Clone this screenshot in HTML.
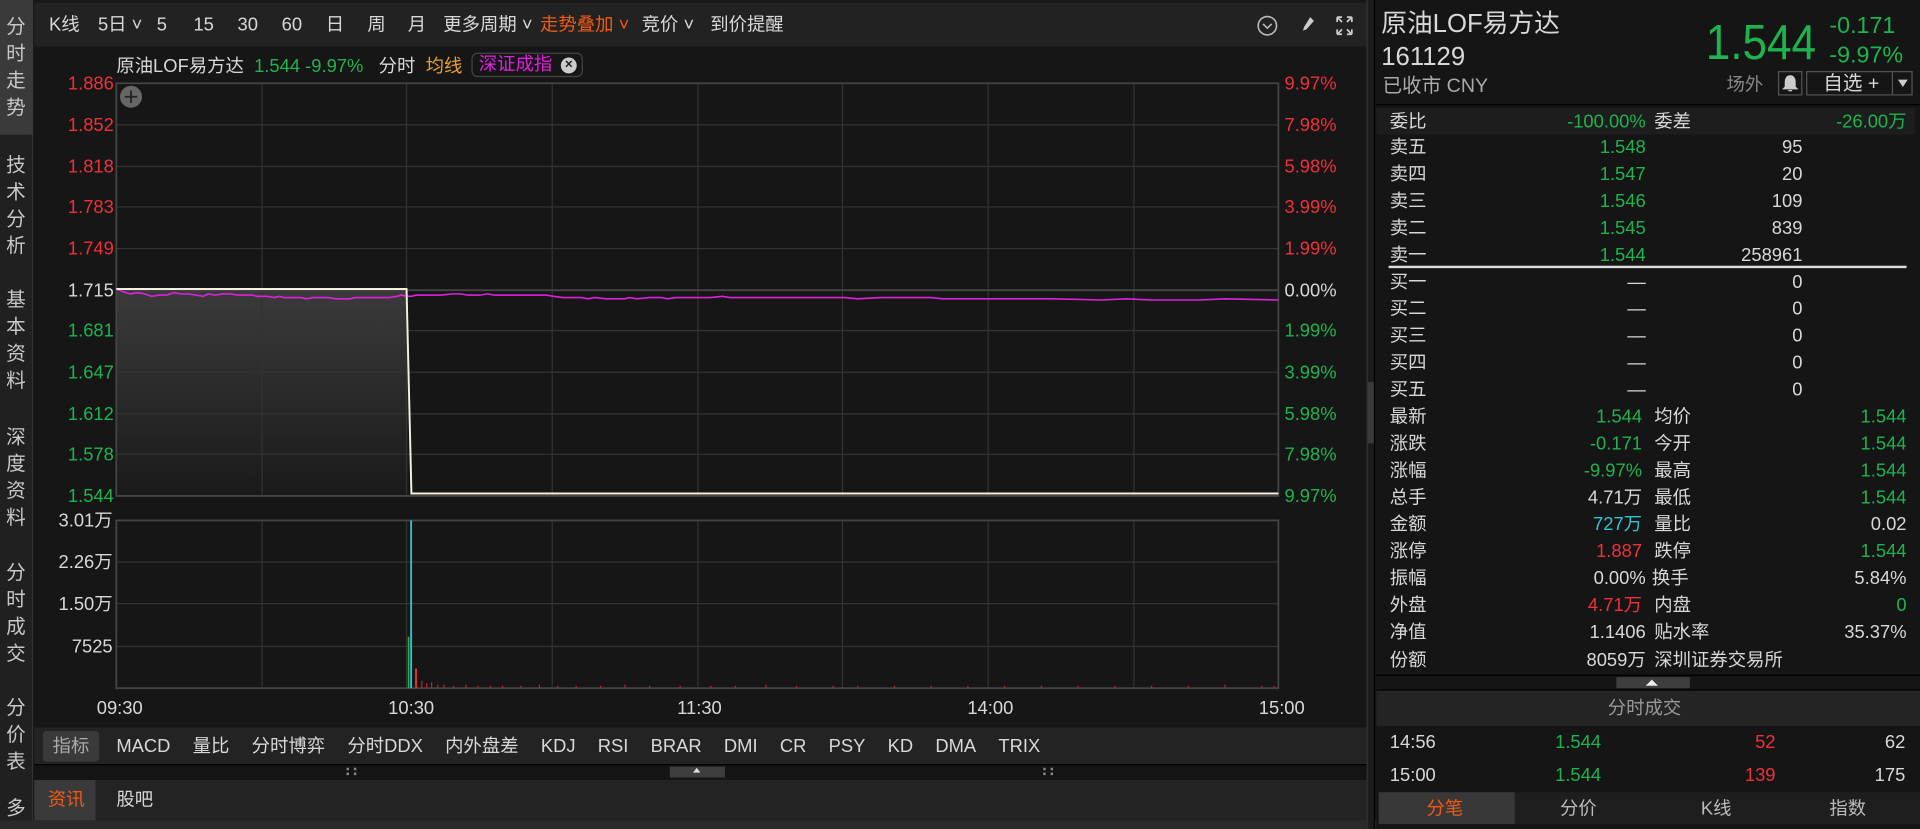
<!DOCTYPE html>
<html><head><meta charset="utf-8"><style>
*{margin:0;padding:0;box-sizing:border-box}
html,body{width:1920px;height:829px;overflow:hidden;background:#0e0e0e}
#w{position:absolute;left:0;top:0;width:1568px;height:677px;transform:scale(1.22449);transform-origin:0 0;background:#161616;font-family:"Liberation Sans","Noto Sans CJK SC",sans-serif;font-size:15px;color:#d8d8d8}
.a{position:absolute;white-space:nowrap;line-height:18px}
.r{text-align:right}
.g{color:#1db44f}.red{color:#f0303a}.o{color:#f05a14}.cy{color:#2ec4d0}.y{color:#e8a030}.m{color:#e020e0}
.side{position:absolute;left:0;top:0;width:27px;height:677px;background:#202020;border-right:1px solid #333}
.side div{position:absolute;left:3px;width:20px;font-size:16px;line-height:22px;text-align:center;color:#c8c8c8}
</style></head><body><div id="w">
<div class="side">
<div style="top:0;height:110px;background:#3a3a3a;left:0;width:27px"></div>
<div class="o" style="top:12px">分<br>时<br>走<br>势</div>
<div style="top:125px">技<br>术<br>分<br>析</div>
<div style="top:235px">基<br>本<br>资<br>料</div>
<div style="top:347px">深<br>度<br>资<br>料</div>
<div style="top:458px">分<br>时<br>成<br>交</div>
<div style="top:568px">分<br>价<br>表</div>
<div style="top:650px">多</div>
</div>
<div class="a" style="left:28px;top:2px;width:1088px;height:36px;background:#222"></div>
<div class="a" style="left:40px;top:12px">K线</div>
<div class="a" style="left:80px;top:12px">5日 ˅</div>
<div class="a" style="left:128px;top:12px">5</div>
<div class="a" style="left:158px;top:12px">15</div>
<div class="a" style="left:194px;top:12px">30</div>
<div class="a" style="left:230px;top:12px">60</div>
<div class="a" style="left:266px;top:12px">日</div>
<div class="a" style="left:300px;top:12px">周</div>
<div class="a" style="left:333px;top:12px">月</div>
<div class="a" style="left:362px;top:12px">更多周期 ˅</div>
<div class="a o" style="left:441px;top:12px">走势叠加 ˅</div>
<div class="a" style="left:524px;top:12px">竞价 ˅</div>
<div class="a" style="left:580px;top:12px">到价提醒</div>
<svg class="a" style="left:1020px;top:10px" width="90" height="22" viewBox="0 0 90 22"><circle cx="15" cy="11" r="7.5" fill="none" stroke="#bbb" stroke-width="1.3"/><path d="M11.5 9.5l3.5 3.5 3.5-3.5" fill="none" stroke="#bbb" stroke-width="1.3"/><path d="M50 4l3 3-6 7-3 1 1-3z" fill="#ccc"/><path d="M72 4h4M72 4v4M84 4h-4M84 4v4M72 18h4M72 18v-4M84 18h-4M84 18v-4M72 4l4 4M84 4l-4 4M72 18l4-4M84 18l-4-4" stroke="#ccc" stroke-width="1.4" fill="none"/></svg>
<div class="a" style="left:95px;top:46px">原油LOF易方达 <span class="g">&nbsp;1.544 -9.97%</span>&nbsp;&nbsp; 分时 &nbsp;<span class="y">均线</span></div>
<div class="a m" style="left:385px;top:43px;height:20px;padding:0 24px 0 5px;border:1px solid #444;border-radius:5px;line-height:18px">深证成指<span style="position:absolute;right:4px;top:3px;width:13px;height:13px;border-radius:7px;background:#ccc;color:#222;font-size:11px;line-height:13px;text-align:center;font-weight:bold">×</span></div>
<svg class="a" style="left:0;top:0" width="1116" height="600">
<defs><linearGradient id="gf" x1="0" y1="0" x2="0" y2="1"><stop offset="0" stop-color="#3a3a3a"/><stop offset="1" stop-color="#1a1a1a"/></linearGradient></defs>
<rect x="95" y="236" width="238" height="169" fill="url(#gf)"/>
<g stroke="#333" stroke-width="1">
<path d="M95 68H1044M95 102H1044M95 136H1044M95 169H1044M95 203H1044M95 270H1044M95 304H1044M95 338H1044M95 371H1044"/>
<path d="M95 425H1044M95 459H1044M95 493H1044M95 528H1044"/>
<path d="M214 68V405M332 68V405M451 68V405M570 68V405M688 68V405M807 68V405M926 68V405M214 425V562M332 425V562M451 425V562M570 425V562M688 425V562M807 425V562M926 425V562"/>
</g>
<g stroke="#444" stroke-width="1.5" fill="none"><path d="M95 68H1044V405H95z M95 237H1044 M95 425H1044V562H95z"/></g>
<polyline fill="none" stroke="#e020e0" stroke-width="1.3" points="95,236 100,238 106,240 112,239 118,240 124,242 130,241 136,241 142,239 148,240 154,240 160,241 166,242 170,240 176,241 182,240 188,240 194,241 200,241 206,241 210,242 214,242 218,242 224,243 228,242 232,243 236,243 240,243 246,243 250,244 256,243 262,243 268,243 274,244 280,244 286,244 290,243 296,243 302,243 308,243 314,243 318,243 324,242 328,241 332,242 336,242 340,241 350,241 360,241 370,240 376,240 382,241 392,241 398,240 404,241 420,241 446,241 452,242 460,243 475,243 480,244 486,243 495,244 510,244 514,243 520,244 530,243 540,243 545,244 552,243 570,243 580,243 590,242 596,243 610,243 640,243 660,243 690,243 700,244 720,243 760,243 770,244 800,244 860,244 900,245 920,244 940,245 980,245 1000,244 1044,245"/>
<polyline fill="none" stroke="#f5efe0" stroke-width="1.6" points="95,236 332,236 336,403 1044,403"/>
<circle cx="107" cy="79" r="9" fill="#666"/><path d="M102 79h10M107 74v10" stroke="#222" stroke-width="1.5"/>
<rect x="335" y="425" width="1.5" height="137" fill="#2ec4d0"/>
<rect x="333" y="520" width="1.3" height="42" fill="#1db44f"/>
<rect x="339" y="546" width="1.5" height="16" fill="#f0303a"/>
<g fill="#c02030">
<rect x="344" y="556" width="1" height="6"/><rect x="348" y="558" width="1" height="4"/><rect x="352" y="557" width="1" height="5"/><rect x="357" y="559" width="1" height="3"/><rect x="362" y="559" width="1" height="3"/><rect x="370" y="560" width="1" height="2"/><rect x="380" y="559" width="1" height="3"/><rect x="390" y="560" width="1" height="2"/><rect x="400" y="560" width="1" height="2"/><rect x="410" y="560" width="1" height="2"/><rect x="425" y="560" width="1" height="2"/><rect x="440" y="559" width="1" height="3"/><rect x="455" y="560" width="1" height="2"/><rect x="470" y="560" width="1" height="2"/><rect x="490" y="560" width="1" height="2"/><rect x="510" y="559" width="1" height="3"/><rect x="530" y="560" width="1" height="2"/><rect x="555" y="560" width="1" height="2"/><rect x="580" y="560" width="1" height="2"/><rect x="600" y="560" width="1" height="2"/><rect x="625" y="559" width="1" height="3"/><rect x="650" y="560" width="1" height="2"/><rect x="680" y="560" width="1" height="2"/><rect x="700" y="560" width="1" height="2"/><rect x="730" y="560" width="1" height="2"/><rect x="760" y="560" width="1" height="2"/><rect x="790" y="560" width="1" height="2"/><rect x="820" y="560" width="1" height="2"/><rect x="850" y="560" width="1" height="2"/><rect x="880" y="560" width="1" height="2"/><rect x="910" y="560" width="1" height="2"/><rect x="940" y="560" width="1" height="2"/><rect x="970" y="560" width="1" height="2"/><rect x="1000" y="559" width="1" height="3"/><rect x="1030" y="560" width="1" height="2"/><rect x="1040" y="560" width="1" height="2"/>
</g>
</svg>
<div class="a r red" style="left:40px;width:53px;top:60px">1.886</div>
<div class="a r red" style="left:40px;width:53px;top:94px">1.852</div>
<div class="a r red" style="left:40px;width:53px;top:128px">1.818</div>
<div class="a r red" style="left:40px;width:53px;top:161px">1.783</div>
<div class="a r red" style="left:40px;width:53px;top:195px">1.749</div>
<div class="a r" style="left:40px;width:53px;top:229px">1.715</div>
<div class="a r g" style="left:40px;width:53px;top:262px">1.681</div>
<div class="a r g" style="left:40px;width:53px;top:296px">1.647</div>
<div class="a r g" style="left:40px;width:53px;top:330px">1.612</div>
<div class="a r g" style="left:40px;width:53px;top:363px">1.578</div>
<div class="a r g" style="left:40px;width:53px;top:397px">1.544</div>
<div class="a red" style="left:1049px;top:60px">9.97%</div>
<div class="a red" style="left:1049px;top:94px">7.98%</div>
<div class="a red" style="left:1049px;top:128px">5.98%</div>
<div class="a red" style="left:1049px;top:161px">3.99%</div>
<div class="a red" style="left:1049px;top:195px">1.99%</div>
<div class="a" style="left:1049px;top:229px">0.00%</div>
<div class="a g" style="left:1049px;top:262px">1.99%</div>
<div class="a g" style="left:1049px;top:296px">3.99%</div>
<div class="a g" style="left:1049px;top:330px">5.98%</div>
<div class="a g" style="left:1049px;top:363px">7.98%</div>
<div class="a g" style="left:1049px;top:397px">9.97%</div>
<div class="a r" style="left:30px;width:62px;top:417px">3.01万</div>
<div class="a r" style="left:30px;width:62px;top:451px">2.26万</div>
<div class="a r" style="left:30px;width:62px;top:485px">1.50万</div>
<div class="a r" style="left:30px;width:62px;top:520px">7525</div>
<div class="a" style="left:79px;top:570px">09:30</div>
<div class="a" style="left:317px;top:570px">10:30</div>
<div class="a" style="left:553px;top:570px">11:30</div>
<div class="a" style="left:790px;top:570px">14:00</div>
<div class="a" style="left:1028px;top:570px">15:00</div>
<div class="a" style="left:28px;top:594px;width:1088px;height:30px;background:#232323"></div>
<div class="a" style="left:35px;top:597px;width:46px;height:25px;background:#3a3a3a;border-radius:3px"></div>
<div class="a" style="left:43px;top:601px;color:#aaa">指标</div>
<div class="a" style="left:95px;top:601px;word-spacing:14px">MACD&nbsp;量比&nbsp;分时博弈&nbsp;分时DDX&nbsp;内外盘差&nbsp;KDJ&nbsp;RSI&nbsp;BRAR&nbsp;DMI&nbsp;CR&nbsp;PSY&nbsp;KD&nbsp;DMA&nbsp;TRIX</div>
<div class="a" style="left:28px;top:624px;width:1088px;height:12px;background:#141414;border-top:1px solid #000"></div>
<div class="a" style="left:547px;top:626px;width:45px;height:9px;background:#3e3e3e"></div>
<div class="a" style="left:566px;top:627px;width:0;height:0;border:3px solid transparent;border-bottom:4px solid #ddd;border-top:0"></div>
<div class="a" style="left:283px;top:627px;width:8px;height:6px;border-left:2px dotted #888;border-right:2px dotted #888"></div>
<div class="a" style="left:852px;top:627px;width:8px;height:6px;border-left:2px dotted #888;border-right:2px dotted #888"></div>
<div class="a" style="left:28px;top:637px;width:1088px;height:33px;background:#232323"></div>
<div class="a" style="left:28px;top:637px;width:50px;height:33px;background:#3a3a3a"></div>
<div class="a o" style="left:39px;top:645px">资讯</div>
<div class="a" style="left:95px;top:645px">股吧</div>
<div class="a" style="left:0;top:670px;width:1568px;height:7px;background:#2a2a2a"></div>
<div class="a" style="left:1116px;top:0;width:7px;height:677px;background:#1c1c1c;border-left:1px solid #333;border-right:1px solid #000"></div>
<div class="a" style="left:1117px;top:312px;width:5px;height:50px;background:#3a3a3a"></div>
<div class="a" style="left:1124px;top:0;width:444px;height:677px;background:#151515"></div>
<div class="a" style="left:1128px;top:8px;font-size:21px;line-height:24px">原油LOF易方达</div>
<div class="a" style="left:1128px;top:35px;font-size:21px;line-height:24px">161129</div>
<div class="a" style="left:1129px;top:62px;color:#aaa;font-size:16px">已收市 CNY</div>
<div class="a g" style="left:1393px;top:14px;font-size:40px;line-height:42px;transform:scaleX(0.9);transform-origin:0 0">1.544</div>
<div class="a g" style="left:1494px;top:11px;font-size:19px;line-height:22px">-0.171</div>
<div class="a g" style="left:1494px;top:35px;font-size:19px;line-height:22px">-9.97%</div>
<div class="a" style="left:1410px;top:61px;color:#888">场外</div>
<div class="a" style="left:1452px;top:58px;width:20px;height:20px;border:1px solid #555"><svg width="18" height="18"><path d="M9 3c-3 0-4 2.5-4 5v4l-1.5 1.5h11L13 12V8c0-2.5-1-5-4-5zM7.5 15h3" stroke="#ccc" fill="#ccc"/></svg></div>
<div class="a" style="left:1475px;top:58px;width:87px;height:20px;border:1px solid #555"></div>
<div class="a" style="left:1489px;top:60px;font-size:16px">自选 +</div>
<div class="a" style="left:1545px;top:59px;width:1px;height:18px;background:#555"></div>
<div class="a" style="left:1550px;top:65px;border:4px solid transparent;border-top:6px solid #ccc;border-bottom:0"></div>
<div class="a" style="left:1124px;top:85px;width:444px;height:1px;background:#000"></div>
<div class="a" style="left:1124px;top:88px;width:440px;height:22px;background:#1d1d1d"></div>
<div class="a" style="left:1135px;top:91px">委比</div><div class="a r g" style="left:1240px;width:104px;top:91px">-100.00%</div><div class="a" style="left:1351px;top:91px">委差</div><div class="a r g" style="left:1440px;width:117px;top:91px">-26.00万</div>
<div class="a" style="left:1135px;top:112px">卖五</div><div class="a r g" style="left:1240px;width:104px;top:112px">1.548</div><div class="a r" style="left:1380px;width:92px;top:112px">95</div>
<div class="a" style="left:1135px;top:134px">卖四</div><div class="a r g" style="left:1240px;width:104px;top:134px">1.547</div><div class="a r" style="left:1380px;width:92px;top:134px">20</div>
<div class="a" style="left:1135px;top:156px">卖三</div><div class="a r g" style="left:1240px;width:104px;top:156px">1.546</div><div class="a r" style="left:1380px;width:92px;top:156px">109</div>
<div class="a" style="left:1135px;top:178px">卖二</div><div class="a r g" style="left:1240px;width:104px;top:178px">1.545</div><div class="a r" style="left:1380px;width:92px;top:178px">839</div>
<div class="a" style="left:1135px;top:200px">卖一</div><div class="a r g" style="left:1240px;width:104px;top:200px">1.544</div><div class="a r" style="left:1380px;width:92px;top:200px">258961</div>
<div class="a" style="left:1134px;top:217px;width:423px;height:2px;background:#ddd"></div>
<div class="a" style="left:1135px;top:222px">买一</div><div class="a r" style="left:1240px;width:104px;top:222px">—</div><div class="a r" style="left:1380px;width:92px;top:222px">0</div>
<div class="a" style="left:1135px;top:244px">买二</div><div class="a r" style="left:1240px;width:104px;top:244px">—</div><div class="a r" style="left:1380px;width:92px;top:244px">0</div>
<div class="a" style="left:1135px;top:266px">买三</div><div class="a r" style="left:1240px;width:104px;top:266px">—</div><div class="a r" style="left:1380px;width:92px;top:266px">0</div>
<div class="a" style="left:1135px;top:288px">买四</div><div class="a r" style="left:1240px;width:104px;top:288px">—</div><div class="a r" style="left:1380px;width:92px;top:288px">0</div>
<div class="a" style="left:1135px;top:310px">买五</div><div class="a r" style="left:1240px;width:104px;top:310px">—</div><div class="a r" style="left:1380px;width:92px;top:310px">0</div>
<div class="a" style="left:1135px;top:332px">最新</div><div class="a r g" style="left:1240px;width:101px;top:332px">1.544</div><div class="a" style="left:1351px;top:332px">均价</div><div class="a r g" style="left:1440px;width:117px;top:332px">1.544</div>
<div class="a" style="left:1135px;top:354px">涨跌</div><div class="a r g" style="left:1240px;width:101px;top:354px">-0.171</div><div class="a" style="left:1351px;top:354px">今开</div><div class="a r g" style="left:1440px;width:117px;top:354px">1.544</div>
<div class="a" style="left:1135px;top:376px">涨幅</div><div class="a r g" style="left:1240px;width:101px;top:376px">-9.97%</div><div class="a" style="left:1351px;top:376px">最高</div><div class="a r g" style="left:1440px;width:117px;top:376px">1.544</div>
<div class="a" style="left:1135px;top:398px">总手</div><div class="a r" style="left:1240px;width:101px;top:398px">4.71万</div><div class="a" style="left:1351px;top:398px">最低</div><div class="a r g" style="left:1440px;width:117px;top:398px">1.544</div>
<div class="a" style="left:1135px;top:420px">金额</div><div class="a r cy" style="left:1240px;width:101px;top:420px">727万</div><div class="a" style="left:1351px;top:420px">量比</div><div class="a r" style="left:1440px;width:117px;top:420px">0.02</div>
<div class="a" style="left:1135px;top:442px">涨停</div><div class="a r red" style="left:1240px;width:101px;top:442px">1.887</div><div class="a" style="left:1351px;top:442px">跌停</div><div class="a r g" style="left:1440px;width:117px;top:442px">1.544</div>
<div class="a" style="left:1135px;top:464px">振幅</div><div class="a r" style="left:1240px;width:104px;top:464px">0.00%</div><div class="a" style="left:1349px;top:464px">换手</div><div class="a r" style="left:1440px;width:117px;top:464px">5.84%</div>
<div class="a" style="left:1135px;top:486px">外盘</div><div class="a r red" style="left:1240px;width:101px;top:486px">4.71万</div><div class="a" style="left:1351px;top:486px">内盘</div><div class="a r g" style="left:1440px;width:117px;top:486px">0</div>
<div class="a" style="left:1135px;top:508px">净值</div><div class="a r" style="left:1240px;width:104px;top:508px">1.1406</div><div class="a" style="left:1351px;top:508px">贴水率</div><div class="a r" style="left:1440px;width:117px;top:508px">35.37%</div>
<div class="a" style="left:1135px;top:531px">份额</div><div class="a r" style="left:1240px;width:104px;top:531px">8059万</div><div class="a" style="left:1351px;top:531px">深圳证券交易所</div>
<div class="a" style="left:1124px;top:551px;width:444px;height:1px;background:#000"></div>
<div class="a" style="left:1320px;top:553px;width:60px;height:9px;background:#3e3e3e"></div>
<div class="a" style="left:1344px;top:555px;border:5px solid transparent;border-bottom:5px solid #eee;border-top:0"></div>
<div class="a" style="left:1124px;top:563px;width:444px;height:1px;background:#000"></div>
<div class="a" style="left:1124px;top:564px;width:444px;height:29px;background:#242424"></div>
<div class="a" style="left:1313px;top:570px;color:#999">分时成交</div>
<div class="a" style="left:1135px;top:598px">14:56</div><div class="a g" style="left:1270px;top:598px">1.544</div><div class="a r red" style="left:1380px;width:70px;top:598px">52</div><div class="a r" style="left:1480px;width:76px;top:598px">62</div>
<div class="a" style="left:1135px;top:625px">15:00</div><div class="a g" style="left:1270px;top:625px">1.544</div><div class="a r red" style="left:1380px;width:70px;top:625px">139</div><div class="a r" style="left:1480px;width:76px;top:625px">175</div>
<div class="a" style="left:1126px;top:647px;width:442px;height:26px;background:#1e1e1e"></div>
<div class="a" style="left:1126px;top:647px;width:111px;height:26px;background:#383838"></div>
<div class="a o" style="left:1165px;top:652px">分笔</div>
<div class="a" style="left:1274px;top:652px;color:#bbb">分价</div>
<div class="a" style="left:1389px;top:652px;color:#bbb">K线</div>
<div class="a" style="left:1494px;top:652px;color:#bbb">指数</div>
</div></body></html>
